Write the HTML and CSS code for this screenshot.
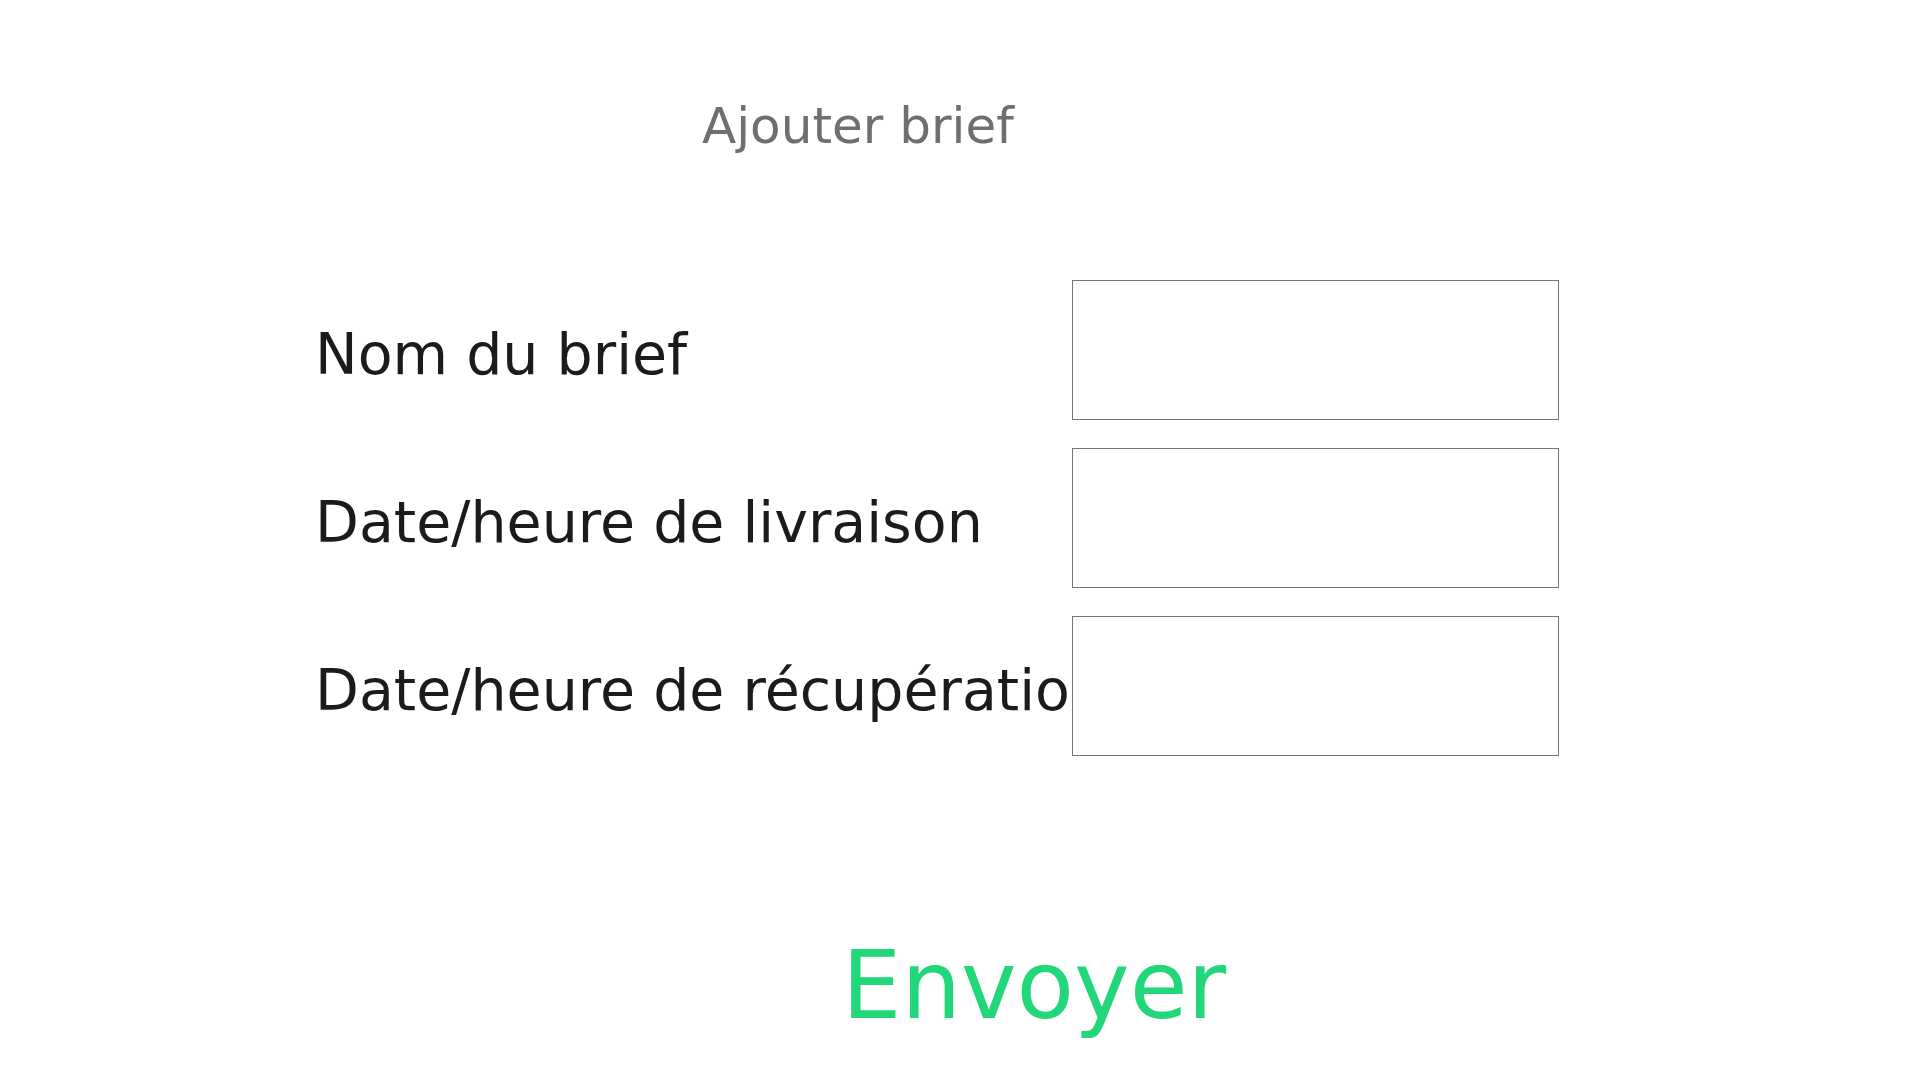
FILE: index.html
```html
<!DOCTYPE html>
<html lang="fr">
<head>
<meta charset="utf-8">
<title>Ajouter brief</title>
<link rel="stylesheet" href="styles.css">
</head>
<body>
<main class="page">
  <h1 class="title">Ajouter brief</h1>
  <form class="form">
    <div class="row">
      <label class="label" for="nom">Nom du brief</label>
      <input class="field" id="nom" type="text">
    </div>
    <div class="row">
      <label class="label" for="livraison">Date/heure de livraison</label>
      <input class="field" id="livraison" type="text">
    </div>
    <div class="row">
      <label class="label" for="recup">Date/heure de récupération</label>
      <input class="field" id="recup" type="text">
    </div>
    <div class="actions">
      <button class="submit" type="button">Envoyer</button>
    </div>
  </form>
</main>
</body>
</html>
```
FILE: styles.css
```css
html, body {
  margin: 0;
  padding: 0;
  background: #ffffff;
}
body {
  font-family: "DejaVu Sans", sans-serif;
}
.page {
  padding-top: 97px;
}
.title {
  margin: 0 0 0 702px;
  font-size: 50px;
  font-weight: normal;
  line-height: 58px;
  color: #6f6f6f;
}
.form {
  margin-top: 125px;
  padding-left: 315px;
  display: flex;
  flex-direction: column;
  gap: 28px;
}
.row {
  display: flex;
  align-items: flex-start;
}
.label {
  width: 757px;
  flex: none;
  overflow: hidden;
  white-space: nowrap;
  padding-top: 41px;
  font-size: 57px;
  line-height: 66px;
  color: #1b1b1b;
}
.field {
  box-sizing: border-box;
  width: 487px;
  height: 140px;
  margin: 0;
  padding: 0;
  border: 1px solid #767676;
  border-radius: 0;
  background: #ffffff;
  outline: none;
}
.actions {
  margin-top: 147px;
  padding-left: 527px;
}
.submit {
  margin: 0;
  padding: 0;
  border: none;
  background: none;
  font-family: "DejaVu Sans", sans-serif;
  font-size: 94px;
  line-height: 110px;
  color: #22d67a;
  cursor: pointer;
}
```
